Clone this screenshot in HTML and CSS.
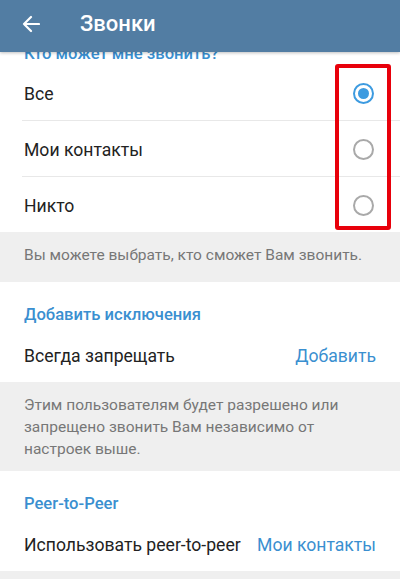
FILE: index.html
```html
<!DOCTYPE html>
<html lang="ru">
<head>
    <meta charset="UTF-8">
    <meta name="viewport" content="width=device-width, initial-scale=1.0">
    <title>Звонки</title>
    <link rel="stylesheet" href="styles.css">
</head>
<body>
    <header class="topbar">
        <svg class="back" width="18" height="18" viewBox="0 0 18 18">
            <path d="M17 9H2M9 2L2 9l7 7" fill="none" stroke="#fff" stroke-width="2.2" stroke-linecap="round" stroke-linejoin="round"/>
        </svg>
        <h1>Звонки</h1>
    </header>

    <main class="screen">
        <section class="card">
            <h2 class="card-title first">Кто может мне звонить?</h2>
            <div class="row">
                <span>Все</span>
                <span class="radio checked"></span>
            </div>
            <div class="row">
                <span>Мои контакты</span>
                <span class="radio"></span>
            </div>
            <div class="row last">
                <span>Никто</span>
                <span class="radio"></span>
            </div>
        </section>
        <p class="note one">Вы можете выбрать, кто сможет Вам звонить.</p>

        <section class="card">
            <h2 class="card-title">Добавить исключения</h2>
            <div class="row last">
                <span>Всегда запрещать</span>
                <span class="value">Добавить</span>
            </div>
        </section>
        <p class="note">Этим пользователям будет разрешено или запрещено звонить Вам независимо от настроек выше.</p>

        <section class="card">
            <h2 class="card-title">Peer-to-Peer</h2>
            <div class="row last">
                <span>Использовать peer-to-peer</span>
                <span class="value">Мои контакты</span>
            </div>
        </section>
    </main>

    <div class="highlight"></div>
</body>
</html>
```

FILE: styles.css
```css
* {
    margin: 0;
    padding: 0;
    box-sizing: border-box;
}

body {
    font-family: Roboto, "Noto Sans", sans-serif;
    background-color: #efefef;
    color: #222;
    width: 400px;
    height: 579px;
    overflow: hidden;
    position: relative;
}

.topbar {
    position: absolute;
    top: 0;
    left: 0;
    right: 0;
    height: 52px;
    background-color: #527da3;
    display: flex;
    align-items: center;
    padding-left: 22px;
    box-shadow: 0 1px 3px rgba(0, 0, 0, 0.25);
    z-index: 2;
}

.topbar .back {
    margin-top: -4px;
}

.topbar h1 {
    color: #fff;
    font-size: 22px;
    font-weight: 500;
    margin-left: 40px;
    margin-top: -5px;
}

.card {
    background-color: #fff;
}

.card-title {
    color: #3a8fd0;
    font-size: 16.6px;
    font-weight: 500;
    line-height: 20px;
    padding: 23px 24px 2px;
}

.card-title.first {
    padding-top: 44px;
    padding-bottom: 1px;
}

.row {
    display: flex;
    justify-content: space-between;
    align-items: center;
    height: 56px;
    margin-left: 22px;
    padding-left: 2px;
    padding-right: 24px;
    padding-top: 2px;
    font-size: 17.6px;
    border-bottom: 1px solid #e8e8e8;
}

.row.last {
    border-bottom: none;
    height: 55px;
}

.radio {
    width: 21px;
    height: 21px;
    border: 2px solid #a9a9a9;
    border-radius: 50%;
    margin-right: 2px;
    position: relative;
}

.radio.checked {
    border-color: #3d9be0;
}

.radio.checked::after {
    content: "";
    position: absolute;
    top: 3px;
    left: 3px;
    width: 11px;
    height: 11px;
    border-radius: 50%;
    background-color: #3d9be0;
}

.value {
    color: #3a8fd0;
}

.note {
    color: #777;
    font-size: 15.5px;
    line-height: 22px;
    padding: 12px 24px 11px;
}

.note.one {
    padding-bottom: 16px;
}

.highlight {
    position: absolute;
    left: 335px;
    top: 64px;
    width: 56px;
    height: 166px;
    border: 4px solid #e8000b;
    border-radius: 3px;
}
```
